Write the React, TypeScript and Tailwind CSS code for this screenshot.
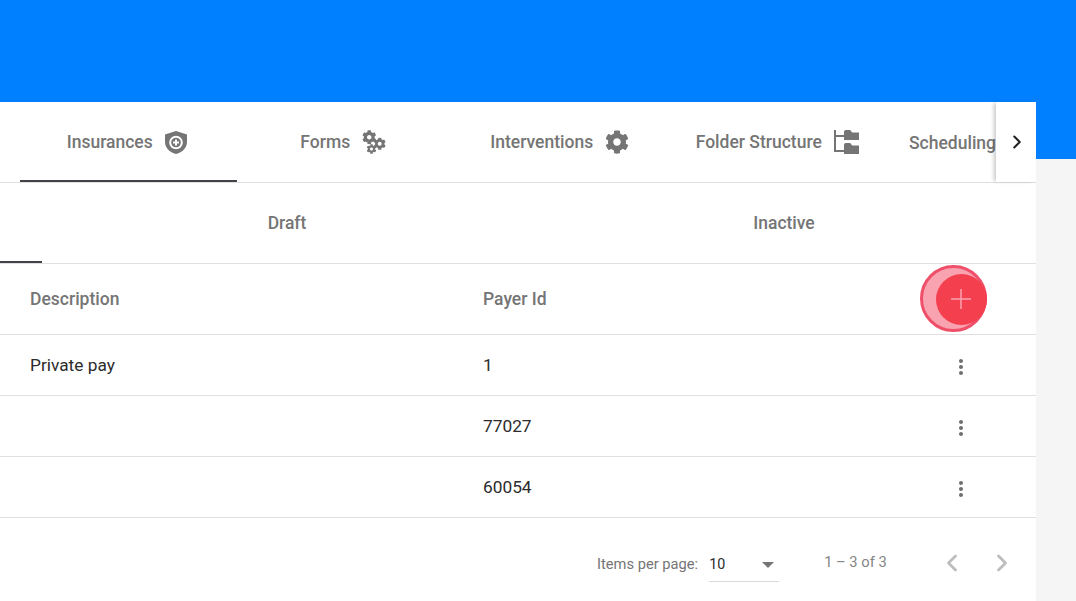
import { ChevronLeft, ChevronRight } from "lucide-react";
import { FaCog } from "react-icons/fa";
import { MdMoreVert } from "react-icons/md";

const ShieldIcon = () => (
  <svg width="22" height="23" viewBox="0 0 22 23" className="ml-3 text-[#757575]">
    <path
      fill="currentColor"
      d="M11 0 0 3.600v7.400c0 5.600 4.400 10.400 11 12 6.600-1.600 11-6.400 11-12V3.600L11 0z"
    />
    <circle cx="11" cy="11.500" r="6.800" fill="#fff" />
    <circle cx="11" cy="11.500" r="4.800" fill="currentColor" />
    <path fill="#fff" d="M10 8.500h2v2h2v2h-2v2h-2v-2H8v-2h2z" />
  </svg>
);

const CogsIcon = () => (
  <svg width="24" height="24" viewBox="0 0 24 24" className="ml-3 text-[#757575]">
    <FaCog x={0} y={0} size={14.5} />
    <FaCog x={11.5} y={7.5} size={12.5} />
    <FaCog x={4.5} y={14} size={10} />
  </svg>
);

const FolderTreeIcon = () => (
  <svg width="26" height="24" viewBox="0 0 26 24" className="ml-3 text-[#757575]">
    <path fill="none" stroke="currentColor" strokeWidth="2" d="M1 0v21h9M1 6h9" />
    <path fill="currentColor" d="M10 2c0-1.200.8-2 1.800-2h4.400l2 2.400h6.800V10H10z" />
    <path fill="currentColor" d="M10 15c0-1.200.8-2 1.800-2h4.400l2 2.400h6.800V24H10z" />
  </svg>
);

const tabs = [
  { label: "Insurances", icon: <ShieldIcon />, active: true },
  { label: "Forms", icon: <CogsIcon /> },
  { label: "Interventions", icon: <FaCog className="ml-3 text-[24px] text-[#757575]" /> },
  { label: "Folder Structure", icon: <FolderTreeIcon /> },
];

const rows = [
  { description: "Private pay", payerId: "1" },
  { description: "", payerId: "77027" },
  { description: "", payerId: "60054" },
];

export default function App() {
  return (
    <div className="h-[601px] w-[1076px] overflow-hidden bg-[#f5f5f5] font-['Roboto',sans-serif]">
      <div className="h-[159px] bg-[#0080ff]" />

      <div className="-mt-[57px] h-[499px] w-[1036px] bg-white">
        {/* Main tabs */}
        <div className="flex h-[81px] border-b border-[#e0e0e0]">
          <div className="flex min-w-0 flex-1 overflow-hidden pl-5 text-[17.500px] font-medium text-[#757575]">
            {tabs.map((tab) => (
              <div
                key={tab.label}
                className={`flex h-[80px] w-[216.500px] shrink-0 items-center justify-center border-b-2 pt-[2px] ${
                  tab.active ? "border-[#424248] pr-[3px]" : "border-transparent"
                } ${tab.label === "Forms" || tab.label === "Interventions" ? "pr-[3px]" : ""}`}
              >
                {tab.label}
                {tab.icon}
              </div>
            ))}
            <div className="flex h-[80px] shrink-0 items-center pl-[23px] pt-[2px] whitespace-nowrap">
              Scheduling
            </div>
          </div>
          <div className="flex h-[80px] w-10 shrink-0 items-center justify-center pl-[1px] shadow-[-3px_0_4px_-1px_rgba(0,0,0,0.22)]">
            <ChevronRight size={22} strokeWidth={2.2} className="text-[#212121]" />
          </div>
        </div>

        {/* Status tabs */}
        <div className="flex h-[81px] border-b border-[#e0e0e0] text-[17.500px] font-medium text-[#757575]">
          <div className="h-[80px] w-[42px] border-b-2 border-[#424248]" />
          <div className="flex h-[80px] w-[490px] items-center justify-center pt-[1px]">Draft</div>
          <div className="flex h-[80px] w-[504px] items-center justify-center pt-[1px]">Inactive</div>
        </div>

        {/* Table header */}
        <div className="flex h-[71px] items-center border-b border-[#e0e0e0] text-[17.500px] font-medium text-[#757575]">
          <div className="w-[483px] pl-[30px]">Description</div>
          <div className="flex-1">Payer Id</div>
          <div className="relative mr-[49px] flex h-[51px] w-[51px] items-center justify-center">
            <div className="absolute -left-4 -top-[9px] h-[67px] w-[67px] rounded-full border-[3px] border-[#ef4f68] bg-[#f9a3b1]" />
            <div className="absolute inset-0 rounded-full bg-[#f43f4f]" />
            <svg width="22" height="22" viewBox="0 0 22 22" className="relative -ml-[2px]">
              <path stroke="#f9a3b1" strokeWidth="1.500" d="M11 1v20M1 11h20" />
            </svg>
          </div>
        </div>

        {rows.map((row) => (
          <div
            key={row.payerId}
            className="flex h-[61px] items-center border-b border-[#e0e0e0] text-[17.300px] text-[#2b2b2b]"
          >
            <div className="w-[483px] pl-[30px] pt-[2px]">{row.description}</div>
            <div className="flex-1 pt-[2px]">{row.payerId}</div>
            <div className="mr-[63px] flex w-6 justify-center pt-1">
              <MdMoreVert size={24} className="text-[#6f6f6f]" />
            </div>
          </div>
        ))}

        {/* Paginator */}
        <div className="flex h-[82px] items-center pt-[9px] text-[#757575]">
          <div className="ml-[597px] pt-[2px] text-[14.700px]">Items per page:</div>
          <div className="ml-[11px] flex h-[36px] w-[70px] items-center justify-between border-b border-[#d9d9d9] pr-[5px] pt-[3px] text-[14.300px] text-[#2b2b2b]">
            10
            <span className="h-0 w-0 border-x-[6px] border-t-[6px] border-x-transparent border-t-[#757575]" />
          </div>
          <div className="mb-[3px] ml-[45px] text-[14.700px] text-[#858585]">1 – 3 of 3</div>
          <ChevronLeft size={28} strokeWidth={2.4} className="mb-[2px] ml-[51px] text-[#bdbdbd]" />
          <ChevronRight size={28} strokeWidth={2.4} className="mb-[2px] ml-[22px] text-[#bdbdbd]" />
        </div>
      </div>
    </div>
  );
}
